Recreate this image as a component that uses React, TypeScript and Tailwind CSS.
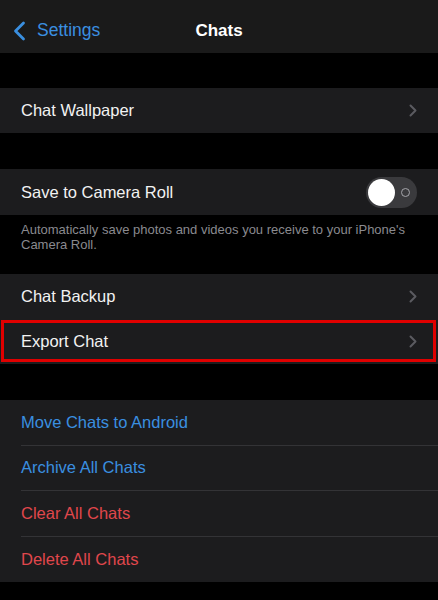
import React from "react";

const font = { fontFamily: '"Liberation Sans", Arial, sans-serif' };

function Chevron() {
  return (
    <svg width="8" height="13" viewBox="0 0 8 13" className="mr-[21px]">
      <path d="M1.5 1.5 L6.5 6.5 L1.5 11.5" fill="none" stroke="#5b5b60" strokeWidth="2" strokeLinecap="round" strokeLinejoin="round" />
    </svg>
  );
}

function Row({ label, chevron = true, children }: { label: string; chevron?: boolean; children?: React.ReactNode }) {
  return (
    <div className="flex h-[45px] items-center justify-between bg-[#1c1c1e] pl-[21px]">
      <span className="text-[16.5px] text-[#f2f2f2]">{label}</span>
      {chevron && <Chevron />}
      {children}
    </div>
  );
}

function ActionRow({ label, color, last = false }: { label: string; color: string; last?: boolean }) {
  return (
    <div className="pl-[21px]">
      <div className={`flex h-[45.5px] items-center ${last ? "" : "border-b border-[#333336]"}`}>
        <span className={`text-[16.5px] ${color}`}>{label}</span>
      </div>
    </div>
  );
}

export default function App() {
  return (
    <div className="h-[600px] w-[438px] overflow-hidden bg-black" style={font}>
      <div className="grid h-[53px] grid-cols-[1fr_auto_1fr] items-center bg-[#1a1a1a] pt-[8px]">
        <div className="flex items-center pl-[13px]">
          <svg width="13" height="20" viewBox="0 0 13 20">
            <path d="M10.5 2 L2.5 10 L10.5 18" fill="none" stroke="#3a8fe0" strokeWidth="2.8" strokeLinecap="round" strokeLinejoin="round" />
          </svg>
          <span className="ml-[11px] text-[17.5px] text-[#3a8fe0]">Settings</span>
        </div>
        <span className="text-[17px] font-bold text-white">Chats</span>
        <div />
      </div>

      <div className="h-[35px]" />
      <Row label="Chat Wallpaper" />

      <div className="h-[36px]" />
      <div className="flex h-[46px] items-center justify-between bg-[#1c1c1e] pl-[21px] pr-[21px]">
        <span className="text-[16.5px] text-[#f2f2f2]">Save to Camera Roll</span>
        <div className="flex h-[31px] w-[51px] items-center rounded-full bg-[#3a3a3d] pl-[2px]">
          <div className="h-[27px] w-[27px] rounded-full bg-white" />
          <div className="ml-[6px] h-[9px] w-[9px] rounded-full border border-[#a5a5aa]" />
        </div>
      </div>
      <div className="h-[59px] px-[21px] pt-[7px] text-[13px] leading-[15px] text-[#8a8a8f]">
        Automatically save photos and videos you receive to your iPhone's Camera Roll.
      </div>

      <Row label="Chat Backup" />
      <div className="relative">
        <Row label="Export Chat" />
        <div className="pointer-events-none absolute left-[1px] right-[2px] top-[1px] h-[42px] border-[3px] border-[#e00000]" />
      </div>

      <div className="h-[36px]" />
      <div className="bg-[#1c1c1e]">
        <ActionRow label="Move Chats to Android" color="text-[#3a8fe0]" />
        <ActionRow label="Archive All Chats" color="text-[#3a8fe0]" />
        <ActionRow label="Clear All Chats" color="text-[#e0474c]" />
        <ActionRow label="Delete All Chats" color="text-[#e0474c]" last />
      </div>
    </div>
  );
}
